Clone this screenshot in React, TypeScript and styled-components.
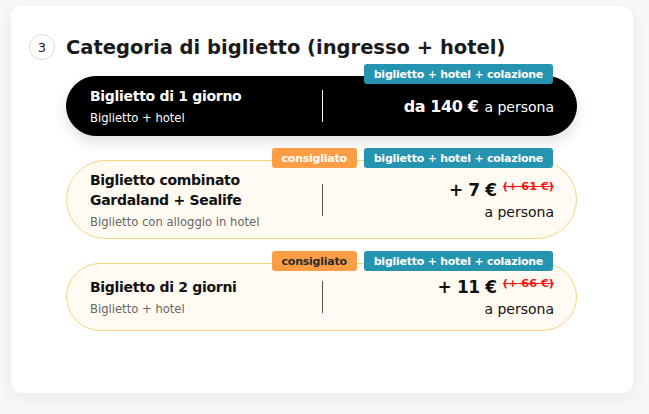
import React from "react";
import styled, { createGlobalStyle } from "styled-components";

const Global = createGlobalStyle`
  html, body { margin: 0; padding: 0; background: #f8f7f5; }
  body { font-family: "DejaVu Sans", "Noto Sans", sans-serif; color: #111; }
`;

const Page = styled.div`
  padding: 6px 16px 0 11px;
  height: 414px;
  box-sizing: border-box;
`;

const Panel = styled.section`
  width: 622px;
  height: 387px;
  box-sizing: border-box;
  background: #fff;
  border-radius: 10px;
  box-shadow: 0 4px 14px rgba(0, 0, 0, 0.06);
  padding: 28px 56px 0 18px;
`;

const TitleRow = styled.div`
  display: flex;
  align-items: center;
  gap: 11px;
  height: 26px;
`;

const StepCircle = styled.div`
  width: 24px;
  height: 24px;
  border-radius: 50%;
  border: 1px solid #dcdcdc;
  display: flex;
  align-items: center;
  justify-content: center;
  font-size: 13px;
  color: #222;
`;

const Title = styled.h2`
  margin: 0;
  font-size: 19.5px;
  font-weight: 700;
  color: #1a1a1a;
`;

const List = styled.div`
  margin: 4px 0 0 37px;
  display: flex;
  flex-direction: column;
  gap: 12px;
`;

const Item = styled.div`
  display: flex;
  flex-direction: column;
`;

const BadgeRow = styled.div`
  display: flex;
  justify-content: flex-end;
  gap: 7px;
  padding-right: 24px;
  height: 20px;
  margin-bottom: -8px;
  position: relative;
  z-index: 1;
`;

const Badge = styled.span<{ $bg: string; $fg: string }>`
  display: inline-flex;
  align-items: center;
  height: 20px;
  padding: 0 10px;
  border-radius: 3px;
  background: ${(p) => p.$bg};
  color: ${(p) => p.$fg};
  font-size: 11px;
  font-weight: 700;
  letter-spacing: -0.25px;
`;

const Card = styled.div<{ $dark?: boolean; $h: number }>`
  height: ${(p) => p.$h}px;
  box-sizing: border-box;
  border-radius: 40px;
  display: grid;
  grid-template-columns: 1fr 1px 1fr;
  align-items: center;
  padding: 0 22px 0 23px;
  background: ${(p) => (p.$dark ? "#000" : "#fffbf3")};
  border: 1px solid ${(p) => (p.$dark ? "#000" : "#f5d47f")};
  color: ${(p) => (p.$dark ? "#fff" : "#111")};
  box-shadow: ${(p) => (p.$dark ? "0 6px 14px rgba(0,0,0,0.12)" : "none")};
`;

const Left = styled.div`
  display: flex;
  flex-direction: column;
`;

const Name = styled.div`
  font-size: 14px;
  font-weight: 700;
  letter-spacing: -0.3px;
  line-height: 20px;
`;

const Sub = styled.div<{ $dark?: boolean }>`
  font-size: 11.6px;
  line-height: 16px;
  margin-top: 4px;
  color: ${(p) => (p.$dark ? "#fff" : "#666")};
`;

const Divider = styled.div<{ $dark?: boolean }>`
  width: 1px;
  height: 32px;
  background: ${(p) => (p.$dark ? "#fff" : "#555")};
`;

const Right = styled.div`
  display: flex;
  flex-direction: column;
  align-items: flex-end;
`;

const PriceLine = styled.div`
  display: flex;
  align-items: baseline;
  gap: 6px;
`;

const Price = styled.span<{ $size: number }>`
  font-size: ${(p) => p.$size}px;
  font-weight: 700;
  letter-spacing: -0.4px;
`;

const Per = styled.span`
  font-size: 14px;
  font-weight: 400;
`;

const Old = styled.s`
  font-size: 11.3px;
  font-weight: 700;
  color: #ff1010;
  position: relative;
  top: -6px;
`;

const PerLine = styled.div`
  font-size: 14px;
  margin-top: 4px;
`;

const TEAL = "#2494b0";
const ORANGE = "#fd9e47";

export default function App() {
  return (
    <>
      <Global />
      <Page>
        <Panel>
          <TitleRow>
            <StepCircle>3</StepCircle>
            <Title>Categoria di biglietto (ingresso + hotel)</Title>
          </TitleRow>
          <List>
            <Item>
              <BadgeRow>
                <Badge $bg={TEAL} $fg="#fff">biglietto + hotel + colazione</Badge>
              </BadgeRow>
              <Card $dark $h={60}>
                <Left>
                  <Name>Biglietto di 1 giorno</Name>
                  <Sub $dark>Biglietto + hotel</Sub>
                </Left>
                <Divider $dark />
                <Right>
                  <PriceLine>
                    <Price $size={16}>da 140 €</Price>
                    <Per>a persona</Per>
                  </PriceLine>
                </Right>
              </Card>
            </Item>
            <Item>
              <BadgeRow>
                <Badge $bg={ORANGE} $fg="#fff">consigliato</Badge>
                <Badge $bg={TEAL} $fg="#fff">biglietto + hotel + colazione</Badge>
              </BadgeRow>
              <Card $h={79}>
                <Left>
                  <Name>
                    Biglietto combinato
                    <br />
                    Gardaland + Sealife
                  </Name>
                  <Sub>Biglietto con alloggio in hotel</Sub>
                </Left>
                <Divider />
                <Right>
                  <PriceLine>
                    <Price $size={17}>+ 7 €</Price>
                    <Old>(+ 61 €)</Old>
                  </PriceLine>
                  <PerLine>a persona</PerLine>
                </Right>
              </Card>
            </Item>
            <Item>
              <BadgeRow>
                <Badge $bg={ORANGE} $fg="#2a2a2a">consigliato</Badge>
                <Badge $bg={TEAL} $fg="#fff">biglietto + hotel + colazione</Badge>
              </BadgeRow>
              <Card $h={68}>
                <Left>
                  <Name>Biglietto di 2 giorni</Name>
                  <Sub>Biglietto + hotel</Sub>
                </Left>
                <Divider />
                <Right>
                  <PriceLine>
                    <Price $size={17}>+ 11 €</Price>
                    <Old>(+ 66 €)</Old>
                  </PriceLine>
                  <PerLine>a persona</PerLine>
                </Right>
              </Card>
            </Item>
          </List>
        </Panel>
      </Page>
    </>
  );
}
